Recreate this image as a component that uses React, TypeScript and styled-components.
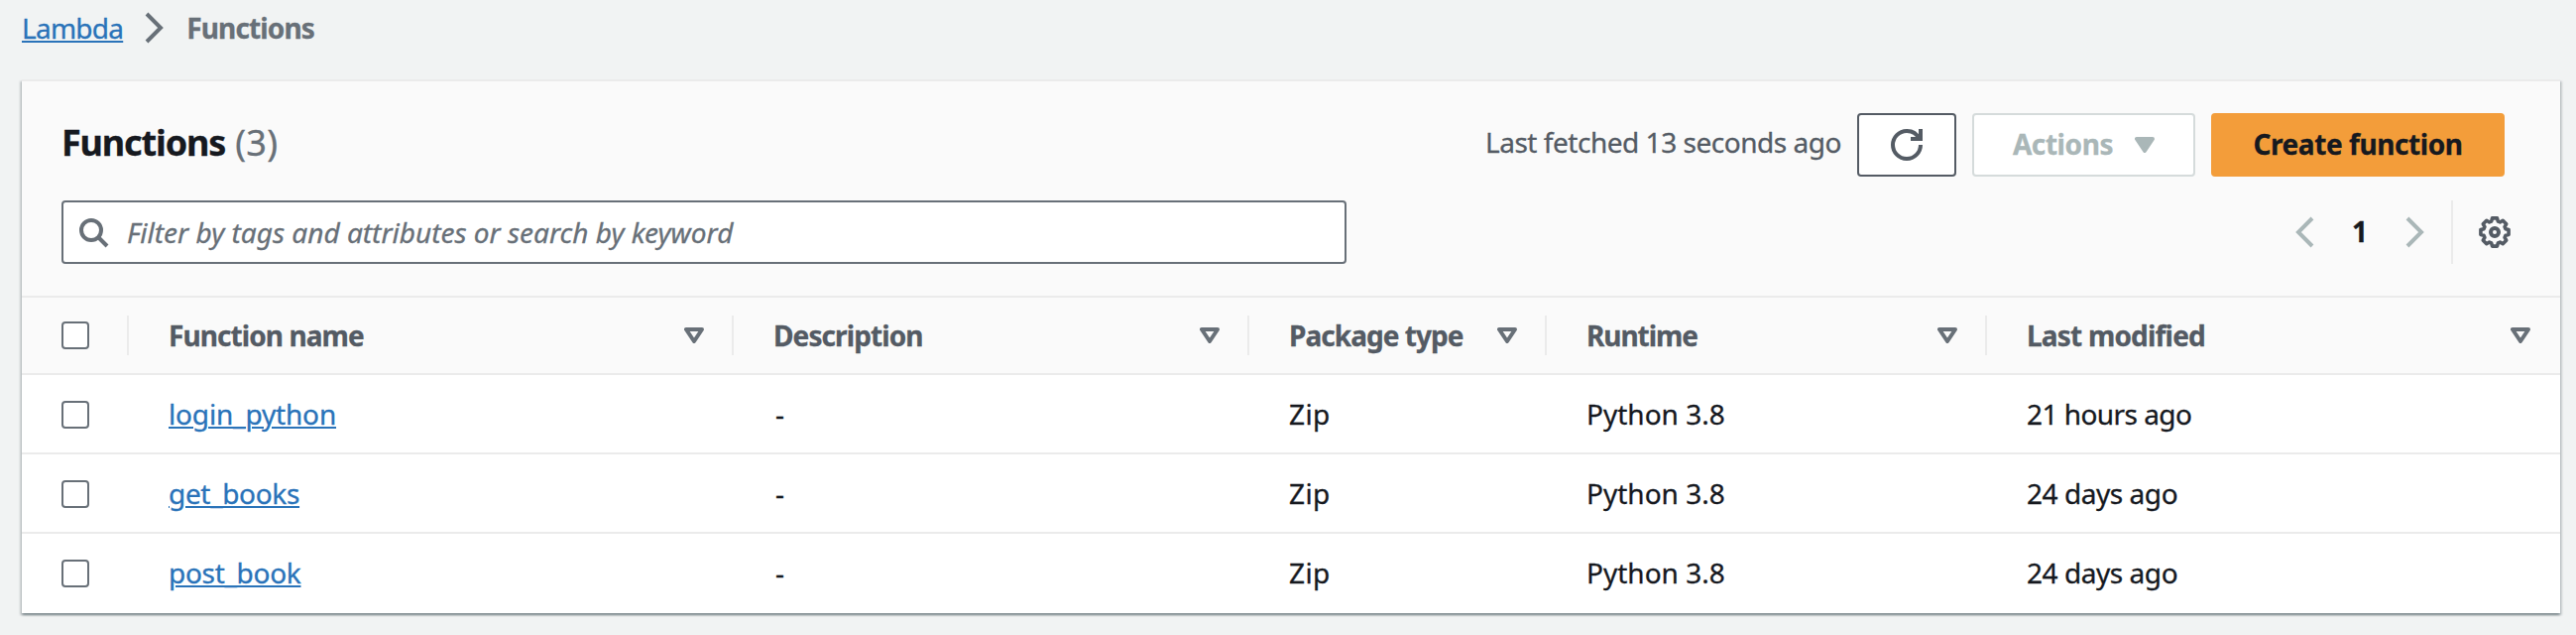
import React from "react";
import styled, { createGlobalStyle } from "styled-components";

const color = {
  page: "#f1f3f3",
  header: "#fafafa",
  line: "#ebebeb",
  text: "#16191f",
  strong: "#545b64",
  muted: "#687078",
  link: "#2a73b9",
  disabled: "#aab7b8",
  disabledLine: "#d5dbdb",
  primary: "#f39d3a",
};

const GlobalStyle = createGlobalStyle`
  * { box-sizing: border-box; }
  body {
    margin: 0;
    background: ${color.page};
    color: ${color.text};
    font: 400 28px/40px "Noto Sans", "Open Sans", sans-serif;
    -webkit-text-stroke: 0.3px currentColor;
  }
`;

const Page = styled.main`
  width: 2598px;
  height: 640px;
  padding: 8px 16px 0 22px;
  background: ${color.page};
`;

const Breadcrumbs = styled.nav`
  display: flex;
  align-items: center;
  height: 40px;
  white-space: nowrap;
  svg { margin: 0 18px 0 14px; }
`;

const Link = styled.a<{ $track?: number }>`
  color: ${color.link};
  letter-spacing: ${(p) => p.$track ?? 0}px;
  text-decoration: underline;
  text-decoration-thickness: 2px;
  text-underline-offset: 2px;
`;

const Current = styled.span`
  padding-bottom: 1px;
  color: ${color.muted};
  font-weight: 700;
  letter-spacing: -0.86px;
`;

const Card = styled.section`
  width: 2560px;
  margin-top: 32px;
  border-top: 2px solid ${color.line};
  background: #fff;
  box-shadow: 0 2px 2px 0 rgba(0, 28, 36, 0.3), 2px 2px 2px 0 rgba(0, 28, 36, 0.15),
    -2px 2px 2px 0 rgba(0, 28, 36, 0.15);
`;

const CardHeader = styled.header`
  height: 218px;
  padding: 32px 40px 0;
  border-bottom: 2px solid ${color.line};
  background: ${color.header};
`;

const TitleRow = styled.div`
  display: flex;
  align-items: center;
  height: 64px;
  padding-right: 16px;
`;

const Title = styled.h1`
  flex: 1;
  margin: 0;
  padding-bottom: 4px;
  font-size: 36px;
  line-height: 44px;
  font-weight: 700;
  letter-spacing: -1.15px;
`;

const Count = styled.span`
  margin-left: 10px;
  color: ${color.muted};
  font-weight: 400;
  letter-spacing: 0.4px;
`;

const Fetched = styled.span`
  padding-bottom: 6px;
  margin-right: 16px;
  color: ${color.strong};
  letter-spacing: -0.47px;
`;

const Button = styled.button<{ $kind: "normal" | "disabled" | "primary"; $width: number }>`
  display: flex;
  align-items: center;
  justify-content: center;
  width: ${(p) => p.$width}px;
  height: 64px;
  margin-right: ${(p) => (p.$kind === "primary" ? 0 : 16)}px;
  padding: 0 0 2px;
  border: 2px solid
    ${(p) => ({ normal: color.strong, disabled: color.disabledLine, primary: color.primary })[p.$kind]};
  border-radius: 4px;
  background: ${(p) => (p.$kind === "primary" ? color.primary : "#fff")};
  color: ${(p) => ({ normal: color.strong, disabled: color.disabled, primary: color.text })[p.$kind]};
  font: inherit;
  font-weight: 700;
  letter-spacing: -0.42px;
  svg { margin-top: 2px; }
`;

const ButtonLabel = styled.span`
  margin-right: 22px;
`;

const FilterRow = styled.div`
  display: flex;
  justify-content: space-between;
  margin-top: 24px;
`;

const Search = styled.label`
  display: flex;
  align-items: center;
  width: 1296px;
  height: 64px;
  padding-left: 14px;
  border: 2px solid ${color.muted};
  border-radius: 4px;
  background: #fff;
  color: ${color.muted};
`;

const SearchInput = styled.input`
  flex: 1;
  margin-left: 18px;
  padding: 0;
  border: 0;
  outline: 0;
  background: none;
  font: inherit;
  font-style: italic;
  &::placeholder { color: ${color.muted}; opacity: 1; }
`;

const Pager = styled.div`
  display: flex;
  align-items: center;
  height: 64px;
  padding-right: 10px;
  color: ${color.disabled};
`;

const PageNumber = styled.span`
  width: 76px;
  padding-bottom: 2px;
  color: ${color.text};
  font-weight: 700;
  text-align: center;
`;

const Settings = styled.span`
  display: flex;
  align-items: center;
  height: 64px;
  margin-left: 22px;
  padding-left: 26px;
  border-left: 2px solid ${color.line};
  color: ${color.strong};
`;

const Row = styled.div<{ $head?: boolean }>`
  display: grid;
  grid-template-columns: 108px 610px 520px 300px 444px 578px;
  align-items: center;
  height: ${(p) => (p.$head ? 78 : 80)}px;
  border-bottom: 2px solid ${color.line};
  background: ${(p) => (p.$head ? color.header : "#fff")};
  &:last-child { border-bottom-color: #fff; }
`;

const HeadCell = styled.div<{ $track: number }>`
  display: flex;
  align-items: center;
  justify-content: space-between;
  height: 40px;
  padding: 0 28px 0 40px;
  border-right: 2px solid ${color.line};
  color: ${color.strong};
  font-weight: 700;
  letter-spacing: ${(p) => p.$track}px;
  white-space: nowrap;
  &:last-child { padding-right: 30px; border-right: 0; }
  svg { color: ${color.muted}; }
`;

const HeadLabel = styled.span`
  padding-bottom: 1px;
`;

const CheckCell = styled.div<{ $head?: boolean }>`
  display: flex;
  align-items: center;
  height: 40px;
  padding: ${(p) => (p.$head ? 0 : 2)}px 0 0 40px;
  border-right: 2px solid ${(p) => (p.$head ? color.line : "transparent")};
`;

const Checkbox = styled.input.attrs({ type: "checkbox" })`
  appearance: none;
  width: 28px;
  height: 28px;
  margin: 0;
  border: 2px solid ${color.muted};
  border-radius: 4px;
  background: #fff;
`;

const Cell = styled.div<{ $track?: number; $indent?: number }>`
  padding-left: ${(p) => p.$indent ?? 40}px;
  letter-spacing: ${(p) => p.$track ?? 0}px;
  white-space: nowrap;
`;

const Svg = styled.svg`
  flex: none;
  display: block;
  width: 32px;
  height: 32px;
  fill: none;
  stroke: currentColor;
  stroke-width: 2;
`;

const ArrowSvg = styled(Svg)`
  width: 20px;
  height: 16px;
  stroke-linejoin: round;
`;

const ChevronLeft = () => (
  <Svg viewBox="0 0 16 16"><path d="M11 1 4 8l7 7" /></Svg>
);
const ChevronRight = ({ stroke }: { stroke?: string }) => (
  <Svg viewBox="0 0 16 16"><path d="m5 1 7 7-7 7" stroke={stroke} /></Svg>
);
const SearchIcon = () => (
  <Svg viewBox="0 0 16 16"><circle cx="7" cy="7" r="5" /><path d="m15 15-4.5-4.5" /></Svg>
);
const RefreshIcon = () => (
  <Svg viewBox="0 0 16 16">
    <path d="M10 5h5V0" />
    <path d="M15 8a7 7 0 1 1-7-7 6.87 6.87 0 0 1 6.3 4" />
  </Svg>
);

const gearPath =
  Array.from({ length: 8 }, (_, i) =>
    [[-10, 7.15], [10, 7.15], [17, 5.7], [28, 5.7]].map(([offset, radius]) => {
      const angle = ((i * 45 + offset) * Math.PI) / 180;
      return `${(8 + radius * Math.sin(angle)).toFixed(2)} ${(8 - radius * Math.cos(angle)).toFixed(2)}`;
    }),
  )
    .flat()
    .map((point, i) => (i ? "L" : "M") + point)
    .join("") + "Z";

const GearIcon = () => (
  <Svg viewBox="0 0 16 16" strokeLinejoin="round">
    <path d={gearPath} strokeWidth="1.8" />
    <circle cx="8" cy="8" r="2" />
  </Svg>
);
const Arrow = ({ filled }: { filled?: boolean }) => (
  <ArrowSvg viewBox="3 4 10 8"><path d="M4 5h8l-4 6z" fill={filled ? "currentColor" : "none"} /></ArrowSvg>
);

const columns: [string, number][] = [
  ["Function name", -0.92],
  ["Description", -0.9],
  ["Package type", -0.95],
  ["Runtime", -1.05],
  ["Last modified", -0.8],
];

const functions = [
  { name: "login_python", nameTrack: -0.16, modified: "21 hours ago", track: -0.55 },
  { name: "get_books", nameTrack: -0.33, modified: "24 days ago", track: -0.45 },
  { name: "post_book", nameTrack: -0.3, modified: "24 days ago", track: -0.45 },
];

export default function App() {
  return (
    <Page>
      <GlobalStyle />
      <Breadcrumbs>
        <Link $track={-0.75}>Lambda</Link>
        <ChevronRight stroke={color.muted} />
        <Current>Functions</Current>
      </Breadcrumbs>
      <Card>
        <CardHeader>
          <TitleRow>
            <Title>Functions<Count>(3)</Count></Title>
            <Fetched>Last fetched 13 seconds ago</Fetched>
            <Button $kind="normal" $width={100}><RefreshIcon /></Button>
            <Button $kind="disabled" $width={225}>
              <ButtonLabel>Actions</ButtonLabel>
              <Arrow filled />
            </Button>
            <Button $kind="primary" $width={296}>Create function</Button>
          </TitleRow>
          <FilterRow>
            <Search>
              <SearchIcon />
              <SearchInput placeholder="Filter by tags and attributes or search by keyword" />
            </Search>
            <Pager>
              <ChevronLeft />
              <PageNumber>1</PageNumber>
              <ChevronRight />
              <Settings><GearIcon /></Settings>
            </Pager>
          </FilterRow>
        </CardHeader>
        <div>
          <Row $head>
            <CheckCell $head><Checkbox /></CheckCell>
            {columns.map(([label, track]) => (
              <HeadCell key={label} $track={track}>
                <HeadLabel>{label}</HeadLabel>
                <Arrow />
              </HeadCell>
            ))}
          </Row>
          {functions.map((fn) => (
            <Row key={fn.name}>
              <CheckCell><Checkbox /></CheckCell>
              <Cell><Link $track={fn.nameTrack}>{fn.name}</Link></Cell>
              <Cell $indent={42}>-</Cell>
              <Cell $track={0.4}>Zip</Cell>
              <Cell>Python 3.8</Cell>
              <Cell $track={fn.track}>{fn.modified}</Cell>
            </Row>
          ))}
        </div>
      </Card>
    </Page>
  );
}
